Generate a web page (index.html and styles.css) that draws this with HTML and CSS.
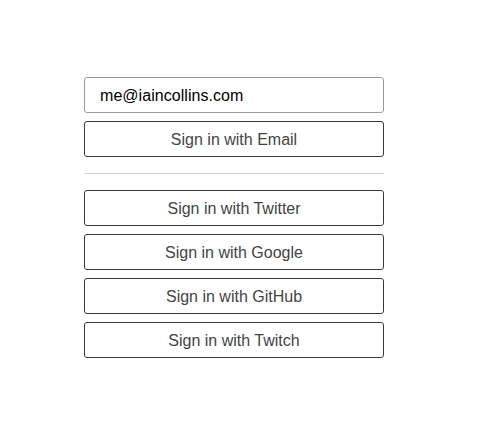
FILE: index.html
```html
<!DOCTYPE html>
<html>
<head>
<meta charset="utf-8">
<link rel="stylesheet" href="styles.css">
</head>
<body>
<div class="signin">
  <form class="email-form">
    <input class="email-input" type="email" value="me@iaincollins.com">
    <button class="btn" type="button">Sign in with Email</button>
  </form>
  <hr class="divider">
  <div class="providers">
    <button class="btn" type="button">Sign in with Twitter</button>
    <button class="btn" type="button">Sign in with Google</button>
    <button class="btn" type="button">Sign in with GitHub</button>
    <button class="btn" type="button">Sign in with Twitch</button>
  </div>
</div>
</body>
</html>
```

FILE: styles.css
```css
html, body {
  margin: 0;
  padding: 0;
  background: #fff;
}
body {
  font-family: "Liberation Sans", Arial, sans-serif;
  font-size: 16px;
}
.signin {
  width: 300px;
  padding-top: 77px;
  padding-left: 84px;
}
.email-form,
.providers {
  display: flex;
  flex-direction: column;
  gap: 8px;
  margin: 0;
}
.email-input {
  box-sizing: border-box;
  width: 300px;
  height: 36px;
  margin: 0;
  padding: 2px 15px 0;
  border: 1px solid #9a9a9a;
  border-radius: 3px;
  font-family: inherit;
  font-size: 16px;
  letter-spacing: 0.05px;
  color: #000;
  background: #fff;
  outline: none;
}
.btn {
  box-sizing: border-box;
  width: 300px;
  height: 36px;
  margin: 0;
  padding: 2px 0 0;
  border: 1px solid #3a3a3a;
  border-radius: 3px;
  background: #fff;
  font-family: inherit;
  font-size: 16px;
  color: #444;
}
.divider {
  margin: 16px 0;
  border: 0;
  height: 1px;
  background: #d0d0d0;
}
```
